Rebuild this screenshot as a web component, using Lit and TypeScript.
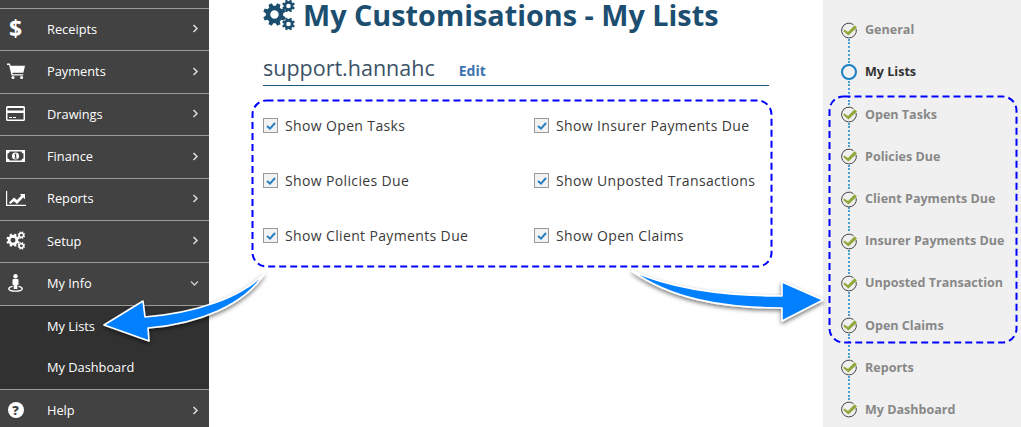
import { LitElement, html, css, svg } from "lit";
import { customElement } from "lit/decorators.js";

function gear(cx: number, cy: number, r: number, hole: number, teeth = 8) {
  const pts: string[] = [];
  const inner = r * 0.76;
  const step = (Math.PI * 2) / teeth;
  for (let i = 0; i < teeth; i++) {
    const a = i * step + step / 2;
    const w = step * 0.2;
    const p = (rad: number, ang: number) =>
      `${(cx + rad * Math.cos(ang)).toFixed(2)} ${(cy + rad * Math.sin(ang)).toFixed(2)}`;
    pts.push(p(inner, a - step * 0.32), p(r, a - w), p(r, a + w), p(inner, a + step * 0.32));
  }
  const ring = `M${cx - hole} ${cy}a${hole} ${hole} 0 1 0 ${hole * 2} 0a${hole} ${hole} 0 1 0 ${-hole * 2} 0Z`;
  return `M${pts.join("L")}Z${ring}`;
}

const gears = svg`<path fill-rule="evenodd" d="${gear(11.5, 15.5, 11.5, 4.2)}"/><path fill-rule="evenodd" d="${gear(25.5, 7, 6.5, 2.3, 8)}"/><path fill-rule="evenodd" d="${gear(25.5, 25, 6.5, 2.3, 8)}"/>`;

const icons: Record<string, unknown> = {
  dollar: html`<span class="dollar">$</span>`,
  cart: html`<svg width="18" height="16" viewBox="0 0 18 16"><path fill="#fff" d="M0 .5h3l.7 2.2H18l-1.6 7H5.4l.4 1.5h10.4v1.4H4.6L2 2H0Z"/><circle cx="6" cy="14.4" r="1.5" fill="#fff"/><circle cx="14.6" cy="14.4" r="1.5" fill="#fff"/></svg>`,
  card: html`<svg width="19" height="15" viewBox="0 0 19 15"><path fill="#fff" fill-rule="evenodd" d="M1.5 0h16A1.5 1.5 0 0 1 19 1.5v12a1.5 1.5 0 0 1-1.5 1.5h-16A1.5 1.5 0 0 1 0 13.5v-12A1.5 1.5 0 0 1 1.5 0ZM1.5 2v2.5h16V2ZM1.5 7v6.5h16V7ZM3 11h3v1H3ZM7 11h3v1H7Z"/></svg>`,
  money: html`<svg width="19" height="12" viewBox="0 0 19 12"><path fill="#fff" fill-rule="evenodd" d="M0 0h19v12H0ZM3.5 1.5A2 2 0 0 1 1.5 3.5v5a2 2 0 0 1 2 2h12a2 2 0 0 1 2-2v-5a2 2 0 0 1-2-2Z"/><circle cx="9.5" cy="6" r="3.6" fill="#fff"/><path fill="#424242" d="M9 3.8h1.2v4h.8v.6H8.3v-.6H9V4.7l-.7.3v-.6Z"/></svg>`,
  chart: html`<svg width="20" height="15" viewBox="0 0 20 15"><path fill="#fff" d="M0 0h1.2v13.8H20V15H0Z"/><path fill="#fff" d="M3 11.5 8 6.5l3 2.6 4.3-4.6-1.6-1.6H19v5.3l-1.7-1.7L11 13 8 10.2 4.2 13Z"/></svg>`,
  gears: html`<svg width="20" height="19" viewBox="0 0 33 32" fill="#fff">${gears}</svg>`,
  person: html`<svg width="15" height="18" viewBox="0 0 15 18"><circle cx="7.5" cy="2.2" r="2.2" fill="#fff"/><path fill="#fff" d="M5.2 5h4.6l.7.7v5H9.3V15H5.7v-4.3H4.5v-5Z"/><path fill="none" stroke="#fff" stroke-width="1.4" d="M4.6 12.4C2.2 12.9.8 13.7.8 14.7c0 1.4 3 2.4 6.7 2.4s6.7-1 6.7-2.4c0-1-1.4-1.8-3.8-2.3"/></svg>`,
  help: html`<span class="help">?</span>`,
};

const chevR = html`<svg class="chev" width="7" height="9" viewBox="0 0 7 9"><path d="M1.5 1 5 4.5 1.5 8" fill="none" stroke="#ddd" stroke-width="1.5"/></svg>`;
const chevD = html`<svg class="chev" width="9" height="7" viewBox="0 0 9 7"><path d="M1 1.5 4.5 5 8 1.5" fill="none" stroke="#ccc" stroke-width="1.3"/></svg>`;

const menu: [string, string][] = [
  ["dollar", "Receipts"],
  ["cart", "Payments"],
  ["card", "Drawings"],
  ["money", "Finance"],
  ["chart", "Reports"],
  ["gears", "Setup"],
  ["person", "My Info"],
];

const steps: [string, string][] = [
  ["General", "done"],
  ["My Lists", "current"],
  ["Open Tasks", "done"],
  ["Policies Due", "done"],
  ["Client Payments Due", "done"],
  ["Insurer Payments Due", "done"],
  ["Unposted Transaction", "done"],
  ["Open Claims", "done"],
  ["Reports", "done"],
  ["My Dashboard", "done"],
];

const options = [
  "Show Open Tasks",
  "Show Insurer Payments Due",
  "Show Policies Due",
  "Show Unposted Transactions",
  "Show Client Payments Due",
  "Show Open Claims",
];

@customElement("app-root")
export class AppRoot extends LitElement {
  static styles = css`
    :host {
      display: block;
      position: relative;
      width: 1021px;
      height: 427px;
      overflow: hidden;
      background: #fff;
      font-family: "Open Sans", sans-serif;
    }
    .page { display: flex; height: 427px; }
    .side {
      width: 209px;
      flex: none;
      background: #424242;
      padding-top: 8px;
      color: #fff;
      font-size: 12.8px;
      box-sizing: border-box;
      overflow: hidden;
    }
    .row {
      display: flex;
      align-items: center;
      height: 42.4px;
      box-sizing: border-box;
      border-top: 1px solid #9a9a9a;
      padding-bottom: 1.6px;
    }
    .ico { width: 47px; flex: none; display: flex; justify-content: center; padding-right: 16px; box-sizing: border-box; align-items: center; }
    .label { flex: 1; }
    .chev { margin-right: 10px; }
    .dollar { font-weight: 700; font-size: 23px; line-height: 1; }
    .help {
      width: 16px; height: 16px; border-radius: 50%; background: #fff; color: #424242;
      font-weight: 800; font-size: 13px; line-height: 16px; text-align: center;
    }
    .sub { background: #313131; border-top: 1px solid #9a9a9a; }
    .sub div { height: 41.8px; display: flex; align-items: center; padding-left: 47px; padding-bottom: 2px; box-sizing: border-box; }
    .main { width: 614px; flex: none; box-sizing: border-box; padding-left: 54px; }
    h1 {
      margin: -1px 0 0;
      height: 32px;
      display: flex;
      align-items: center;
      gap: 7px;
      font-size: 28.8px;
      font-weight: 700;
      color: #1c4e70;
      line-height: 32px;
      white-space: nowrap;
    }
    .user {
      width: 506px;
      margin-top: 22px;
      height: 33px;
      box-sizing: border-box;
      border-bottom: 1px solid #1c5a7d;
      display: flex;
      align-items: baseline;
      gap: 24px;
      font-size: 21.5px;
      line-height: 29px;
      color: #3c5266;
    }
    .edit { font-size: 14px; font-weight: 700; color: #3b73af; }
    .grid {
      display: grid;
      grid-template-columns: 271px 1fr;
      margin-top: 12px;
      width: 506px;
    }
    .opt { display: flex; align-items: center; gap: 7px; height: 55px; font-size: 14px; color: #3a3a3a; letter-spacing: 0.36px; }
    .box {
      width: 15px; height: 15px; box-sizing: border-box; flex: none;
      background: #f2f2f2; border: 1.5px solid #9a9a9a; display: flex; align-items: center; justify-content: center;
    }
    .wizard { flex: 1; background: #f0f0f0; padding-top: 8.7px; box-sizing: border-box; }
    .step {
      position: relative; display: flex; align-items: center; gap: 7px; height: 42.2px; padding-left: 17px;
      font-size: 12.55px; font-weight: 700; color: #888;
    }
    .step.current { color: #333; }
    .step:not(:last-child)::after {
      content: ""; position: absolute; left: 25px; top: 30px; height: 24px; border-left: 2px dotted #4a9fd4;
    }
    .mark { position: relative; z-index: 1; flex: none; display: block; }
    .overlay { position: absolute; left: 0; top: 0; pointer-events: none; }
  `;

  private stepIcon(kind: string) {
    if (kind === "current")
      return html`<svg class="mark" width="18" height="18" viewBox="0 0 18 18"><circle cx="9" cy="9" r="7" fill="#f0f0f0" stroke="#1a80c4" stroke-width="2"/></svg>`;
    return html`<svg class="mark" width="18" height="18" viewBox="0 0 18 18"><path d="M13.4 3.6A7.4 7.4 0 1 0 16.2 8" fill="#f0f0f0" stroke="#444" stroke-width="1"/><path d="M4.4 8.6 8 11l6.6-6.8L17 6.4 8.4 14.6 3.2 10Z" fill="#8fa83a"/></svg>`;
  }

  render() {
    return html`
      <div class="page">
        <nav class="side">
          ${menu.map(([i, t], idx) => html`<div class="row"><span class="ico">${icons[i]}</span><span class="label">${t}</span>${idx === 6 ? chevD : chevR}</div>`)}
          <div class="sub"><div>My Lists</div><div>My Dashboard</div></div>
          <div class="row"><span class="ico">${icons.help}</span><span class="label">Help</span>${chevR}</div>
        </nav>
        <section class="main">
          <h1><svg width="33" height="32" viewBox="0 0 33 32" fill="#1c4e70">${gears}</svg>My Customisations - My Lists</h1>
          <div class="user"><span>support.hannahc</span><span class="edit">Edit</span></div>
          <div class="grid">
            ${options.map((o) => html`<label class="opt"><span class="box"><svg width="10" height="8" viewBox="0 0 10 8"><path d="M1 4l3 2.6L9 1" fill="none" stroke="#2a7fc0" stroke-width="2"/></svg></span>${o}</label>`)}
          </div>
        </section>
        <aside class="wizard">
          ${steps.map(([t, k]) => html`<div class="step ${k}">${this.stepIcon(k)}<span>${t}</span></div>`)}
        </aside>
      </div>
      <svg class="overlay" width="1021" height="427" viewBox="0 0 1021 427">
        <defs><filter id="sh" x="-20%" y="-40%" width="140%" height="190%"><feDropShadow dx="0" dy="2" stdDeviation="2.2" flood-color="#000" flood-opacity=".55"/></filter></defs>
        <g fill="none" stroke="#0000ff" stroke-width="2" stroke-dasharray="7 4">
          <rect x="252.5" y="100.5" width="519" height="166" rx="14"/>
          <rect x="829.5" y="96.5" width="187" height="246" rx="14"/>
        </g>
        <g fill="#0080ff" stroke="#fff" stroke-width="1.6" stroke-linejoin="round" filter="url(#sh)">
          <path d="M264 274C240 298 195 313 145 317L143 301 104 325 149 341 148 328C200 324 245 304 264 274Z"/>
          <path d="M632 271C670 288 720 296 782 296V282L823 300 782 321V308C720 308 670 298 632 271Z"/>
        </g>
      </svg>
    `;
  }
}
